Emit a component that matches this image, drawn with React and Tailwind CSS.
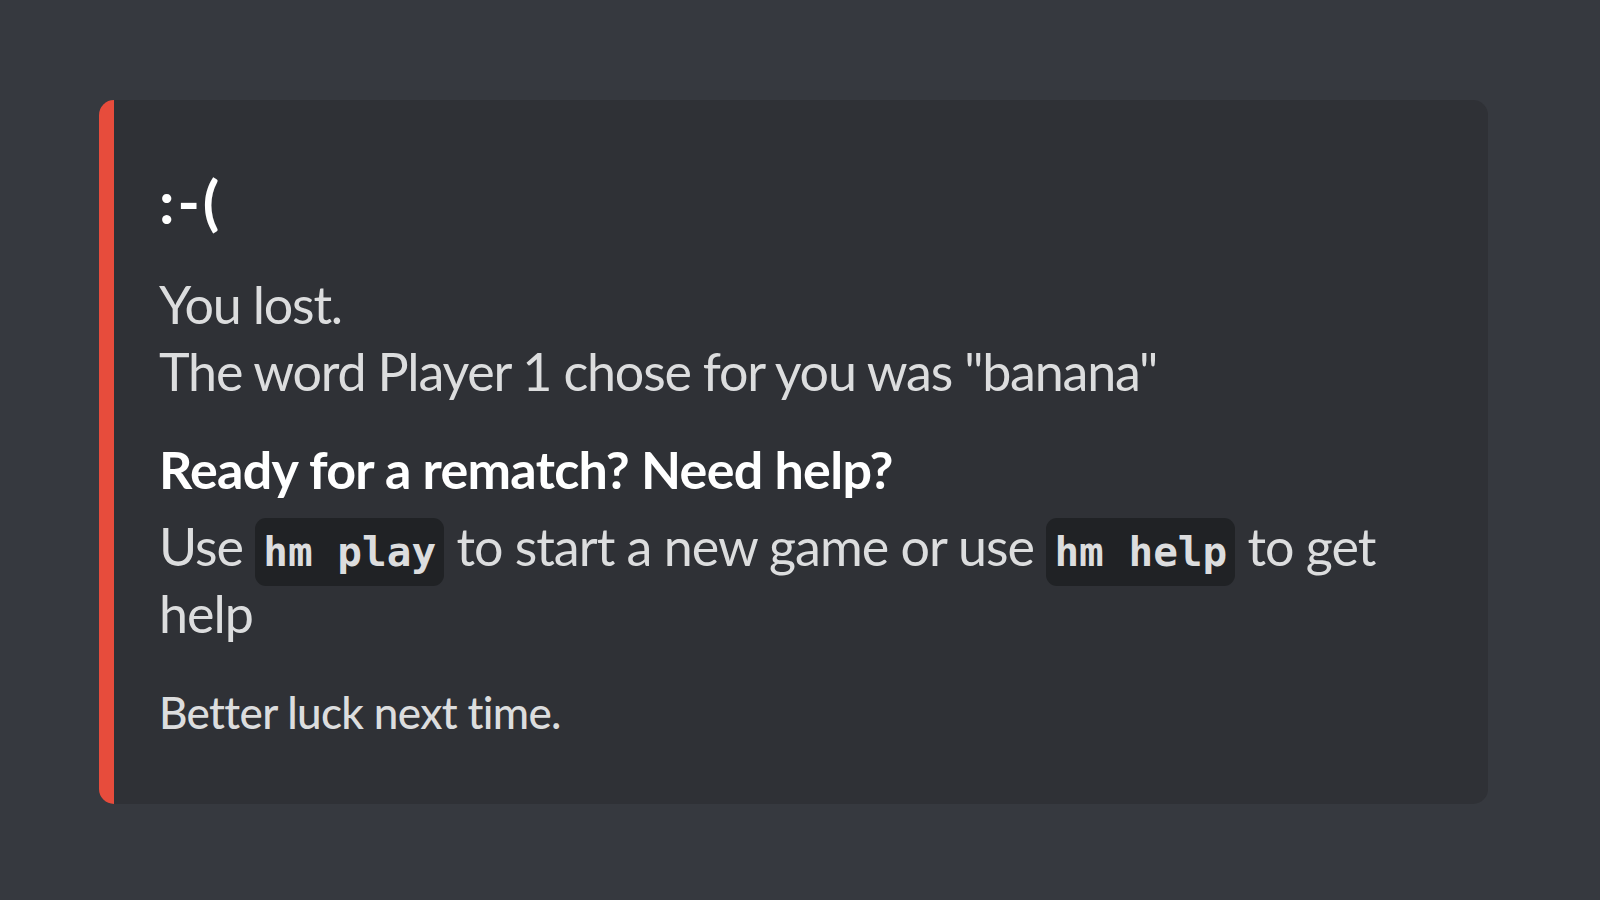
export default function App() {
  const code =
    "font-['DejaVu_Sans_Mono',monospace] font-bold tracking-normal text-[41px] leading-none px-[8px] py-[10px] rounded-[11px] bg-[#202225] text-[#dcddde]";
  return (
    <div className="min-h-screen w-full bg-[#36393f] pt-[100px] pl-[99px] font-['Lato','Noto_Sans',sans-serif] [font-variant-ligatures:none]">
      <div className="w-[1389px] rounded-[15px] border-l-[15px] border-[#e74c3c] bg-[#2f3136] pl-[45px] pr-[59px] pt-[63px] pb-[62px]">
        <div className="text-[60px] leading-[77px] font-bold tracking-[3px] text-white">:-(</div>
        <div className="mt-[31px] text-[52px] leading-[67px] tracking-[-1.2px] text-[#dcddde]">
          <div>You lost.</div>
          <div>The word Player 1 chose for you was "banana"</div>
        </div>
        <div className="mt-[31px] text-[52px] leading-[67px] font-bold tracking-[-0.7px] text-white">
          Ready for a rematch? Need help?
        </div>
        <div className="mt-[10px] text-[52px] leading-[67px] tracking-[-1px] text-[#dcddde]">
          Use <span className={code}>hm play</span> to start a new game or use{" "}
          <span className={code}>hm help</span> to get help
        </div>
        <div className="mt-[36px] text-[44px] leading-[59px] font-medium tracking-[-0.65px] text-[#dcddde]">
          Better luck next time.
        </div>
      </div>
    </div>
  );
}
